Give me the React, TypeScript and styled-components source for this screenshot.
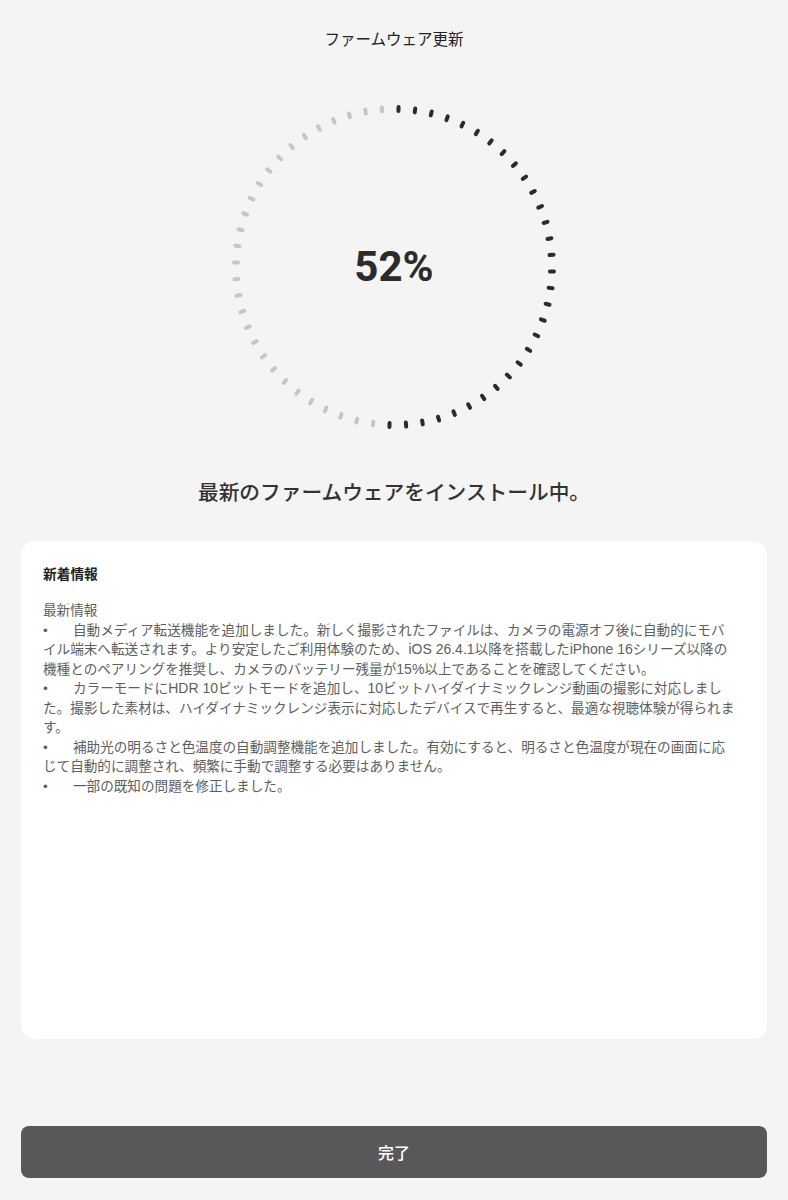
import React from 'react'
import styled, { createGlobalStyle } from 'styled-components'

const GlobalStyle = createGlobalStyle`
  html, body {
    margin: 0;
    padding: 0;
    background: #f4f4f4;
  }
  body {
    font-family: "Liberation Sans", "Noto Sans CJK JP", sans-serif;
    -webkit-font-smoothing: antialiased;
  }
`;

const Page = styled.div`
  width: 788px;
  min-height: 1200px;
  box-sizing: border-box;
  padding: 26px 21px 0;
  display: flex;
  flex-direction: column;
  align-items: center;
`;

const Title = styled.h1`
  margin: 0;
  font-family: "Noto Sans CJK JP", sans-serif;
  font-size: 15.5px;
  line-height: 24px;
  font-weight: 400;
  color: #222;
`;

const RingWrap = styled.div`
  margin-top: 46.5px;
  width: 340px;
  height: 340px;
  display: grid;
  place-items: center;
  & > * {
    grid-area: 1 / 1;
  }
`;

const Tick = styled.line<{ $on: boolean }>`
  stroke: ${p => (p.$on ? '#2b2b2b' : '#c6c6c6')};
  stroke-width: 4;
  stroke-linecap: round;
`;

const Percent = styled.div`
  font-family: Roboto, "Liberation Sans", sans-serif;
  font-weight: 700;
  font-size: 42px;
  line-height: 1;
  color: #2b2b2b;
`;

const Status = styled.h2`
  margin: 40.5px 0 0;
  font-family: "Noto Sans CJK JP", sans-serif;
  font-size: 20.7px;
  line-height: 28px;
  font-weight: 500;
  color: #333;
`;

const Card = styled.section`
  margin-top: 36px;
  align-self: stretch;
  height: 498px;
  box-sizing: border-box;
  background: #fff;
  border-radius: 14px;
  padding: 22px 24px 0 22px;
`;

const CardTitle = styled.h3`
  margin: 0;
  font-family: "Noto Sans CJK JP", sans-serif;
  font-size: 13.7px;
  line-height: 20px;
  font-weight: 700;
  color: #222;
`;

const Notes = styled.div`
  margin-top: 18px;
  width: 695px;
  font-size: 13.6px;
  line-height: 19.5px;
  color: #5e5e5e;
`;

const Line = styled.p`
  margin: 0;
`;

const Bullet = styled.span`
  display: inline-block;
  width: 30px;
`;

// latin runs sit a touch larger, like the system font in the original
const Latin = styled.span`
  font-family: "Liberation Sans", sans-serif;
  font-size: 14px;
`;

const DoneButton = styled.button`
  margin-top: 87px;
  align-self: stretch;
  height: 52px;
  border: none;
  border-radius: 8px;
  background: #58585a;
  color: #fff;
  font-family: "Noto Sans CJK JP", sans-serif;
  font-size: 16px;
  font-weight: 500;
  cursor: pointer;
`;

const Ring = ({ percent }: { percent: number }) => {
  const count = 60
  const on = Math.floor((percent / 100) * count)
  const ticks = Array.from({ length: count }, (_, i) => {
    const a = ((1.63 + i * 6) * Math.PI) / 180
    const s = Math.sin(a)
    const c = Math.cos(a)
    return (
      <Tick
        key={i}
        $on={i < on}
        x1={170 + 156 * s}
        y1={170 - 156 * c}
        x2={170 + 160 * s}
        y2={170 - 160 * c}
      />
    )
  })
  return (
    <RingWrap>
      <svg width="340" height="340" viewBox="0 0 340 340">
        {ticks}
      </svg>
      <Percent>{percent}%</Percent>
    </RingWrap>
  )
}

const notes = [
  '自動メディア転送機能を追加しました。新しく撮影されたファイルは、カメラの電源オフ後に自動的にモバイル端末へ転送されます。より安定したご利用体験のため、iOS 26.4.1以降を搭載したiPhone 16シリーズ以降の機種とのペアリングを推奨し、カメラのバッテリー残量が15%以上であることを確認してください。',
  'カラーモードにHDR 10ビットモードを追加し、10ビットハイダイナミックレンジ動画の撮影に対応しました。撮影した素材は、ハイダイナミックレンジ表示に対応したデバイスで再生すると、最適な視聴体験が得られます。',
  '補助光の明るさと色温度の自動調整機能を追加しました。有効にすると、明るさと色温度が現在の画面に応じて自動的に調整され、頻繁に手動で調整する必要はありません。',
  '一部の既知の問題を修正しました。',
]

const withLatin = (text: string) =>
  text
    .split(/([A-Za-z0-9.% ]+)/)
    .map((part, i) => (i % 2 === 1 ? <Latin key={i}>{part}</Latin> : part))

const App = () => {
  return (
    <>
      <GlobalStyle />
      <Page>
        <Title>ファームウェア更新</Title>
        <Ring percent={52} />
        <Status>最新のファームウェアをインストール中。</Status>
        <Card>
          <CardTitle>新着情報</CardTitle>
          <Notes>
            <Line>最新情報</Line>
            {notes.map((n, i) => (
              <Line key={i}>
                <Bullet>•</Bullet>
                {withLatin(n)}
              </Line>
            ))}
          </Notes>
        </Card>
        <DoneButton>完了</DoneButton>
      </Page>
    </>
  )
}

export default App
